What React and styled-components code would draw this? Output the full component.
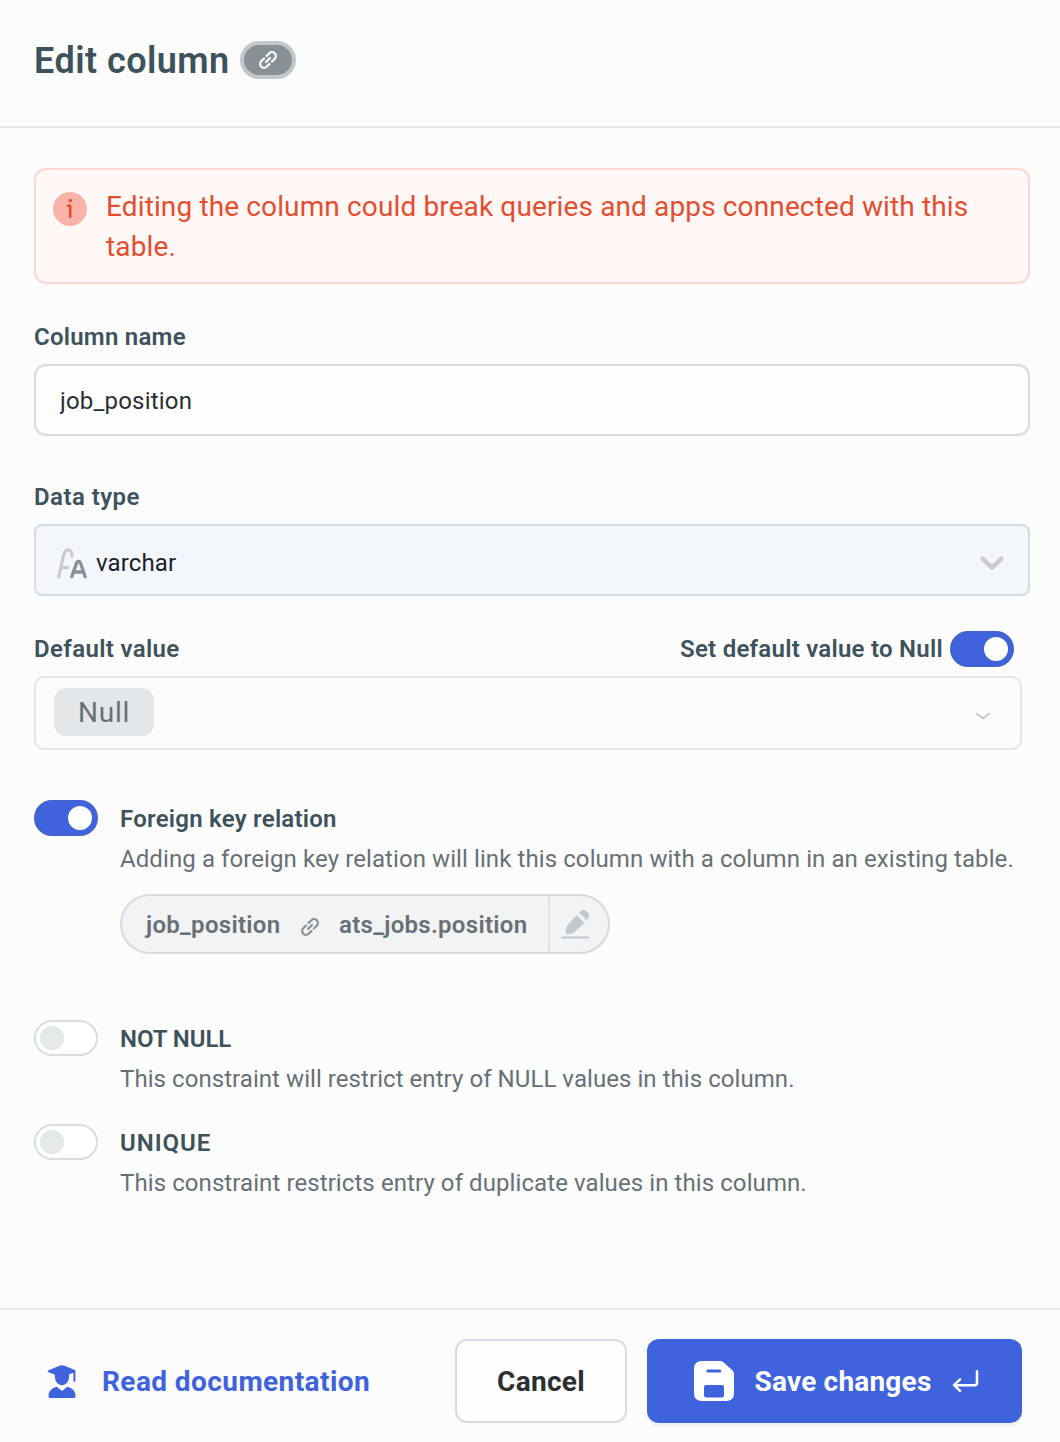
import React, { useState } from 'react';
import styled, { createGlobalStyle } from 'styled-components';

const GlobalStyle = createGlobalStyle`
  * { box-sizing: border-box; }
  body {
    margin: 0;
    background: #fcfcfd;
    font-family: Roboto, "Liberation Sans", sans-serif;
    -webkit-font-smoothing: antialiased;
  }
  svg { display: block; flex: none; }
`;

const Drawer = styled.div`
  display: flex;
  flex-direction: column;
  height: 1442px;
  background: #fcfcfc;
  overflow: hidden;
`;

const Header = styled.header`
  display: flex;
  align-items: center;
  gap: 10px;
  height: 128px;
  padding: 0 34px 6px;
  border-bottom: 2px solid #e6e8eb;
`;

const Title = styled.h1`
  margin: 0;
  padding-top: 2px;
  font-size: 36px;
  line-height: 44px;
  font-weight: 560;
  letter-spacing: 0.46px;
  color: #3e525b;
  width: 196px;
  white-space: nowrap;
`;

const LinkBadge = styled.span`
  display: flex;
  align-items: center;
  justify-content: center;
  width: 56px;
  height: 38px;
  border: 4px solid #c1c8cd;
  border-radius: 19px;
  background: #889096;
  color: #fff;
`;

const Body = styled.main`
  flex: 1;
  display: flex;
  flex-direction: column;
  padding: 40px 30px 0 34px;
`;

const Alert = styled.div`
  display: flex;
  gap: 19px;
  height: 116px;
  padding: 17px 17px 15px;
  border: 2px solid #fdd8d3;
  border-radius: 12px;
  background: #fff8f7;
  color: #e54d2e;
  svg { margin-top: 5px; }
`;

const AlertText = styled.p`
  margin: 0;
  font-size: 28px;
  line-height: 40px;
  letter-spacing: 0.13px;
`;

const Label = styled.span`
  font-size: 24px;
  line-height: 40px;
  font-weight: 560;
  letter-spacing: ${p => p.$track ?? 0.24}px;
  color: #3e525b;
  white-space: nowrap;
`;

const Field = styled.div`
  display: flex;
  flex-direction: column;
  margin-top: ${p => p.$top}px;
`;

const FieldHead = styled.div`
  display: flex;
  justify-content: space-between;
  align-items: center;
  height: 40px;
  padding-right: 16px;
`;

const NullSetting = styled.div`
  display: flex;
  align-items: center;
  gap: 7px;
`;

const Input = styled.input`
  height: 72px;
  margin-top: 7px;
  padding: 2px 24px 0 24px;
  border: 2px solid #d7dbdf;
  border-radius: 12px;
  background: #fdfdfd;
  font: 400 24px Roboto, "Liberation Sans", sans-serif;
  letter-spacing: 0.2px;
  color: #2b2f31;
  outline: none;
`;

const Select = styled.div`
  display: flex;
  align-items: center;
  height: 72px;
  margin-top: 7px;
  padding: 6px 24px 0 20px;
  border: 2px solid #d7dbdf;
  border-radius: 8px;
  background: #f3f6fb;
`;

const SelectValue = styled.span`
  flex: 1;
  margin-left: 9px;
  padding-bottom: 1px;
  font-size: 24px;
  letter-spacing: 0.12px;
  color: #1b1f2a;
`;

const NullSelect = styled.div`
  display: flex;
  align-items: center;
  justify-content: space-between;
  height: 74px;
  margin: 7px 8px 0 0;
  padding: 0 29px 0 18px;
  border: 2px solid #e4e5e6;
  border-radius: 10px;
  background: #fbfcfe;
  svg { margin-top: 3px; }
`;

const NullTag = styled.span`
  display: flex;
  align-items: center;
  justify-content: center;
  width: 100px;
  height: 48px;
  margin-bottom: 2px;
  border-radius: 12px;
  background: #e4e7e9;
  font-size: 28px;
  letter-spacing: 0.7px;
  color: #687076;
`;

const Switch = styled.button`
  display: flex;
  align-items: center;
  flex: none;
  justify-content: ${p => (p.$on ? 'flex-end' : 'flex-start')};
  width: 64px;
  height: 36px;
  padding: 0 4px;
  border: 2px solid ${p => (p.$on ? '#4263cf' : '#dbdcdd')};
  border-radius: 18px;
  background: ${p => (p.$on ? '#3e63dd' : '#fff')};
`;

const Knob = styled.span`
  width: 24px;
  height: 24px;
  border-radius: 50%;
  background: ${p => (p.$on ? '#fff' : '#e4e8e9')};
`;

const Option = styled.section`
  display: flex;
  align-items: flex-start;
  gap: 22px;
  margin-top: ${p => p.$top}px;
`;

const OptionText = styled.div`
  display: flex;
  flex-direction: column;
  margin-top: -1px;
`;

const Hint = styled.p`
  margin: 0;
  font-size: 24px;
  line-height: 40px;
  letter-spacing: ${p => p.$track}px;
  color: #687076;
  white-space: nowrap;
`;

const Relation = styled.div`
  display: flex;
  align-items: center;
  width: 490px;
  height: 60px;
  margin-top: 15px;
  padding: 0 18px 0 24px;
  border: 2px solid #d7dbdf;
  border-radius: 30px;
  background: #f1f3f5;
  color: #687076;
`;

const RelationName = styled.span`
  width: ${p => p.$w}px;
  padding-top: 2px;
  font-size: 24px;
  font-weight: 560;
  letter-spacing: 0.3px;
  white-space: nowrap;
`;

const RelationLink = styled.span`
  margin: 5px 20px 0 19px;
  color: #889096;
`;

const EditCell = styled.span`
  display: flex;
  align-items: center;
  height: 54px;
  margin-left: 19px;
  padding-left: 11px;
  border-left: 2px solid #dfe3e6;
`;

const Footer = styled.footer`
  display: flex;
  align-items: flex-start;
  height: 134px;
  padding: 29px 38px 0 46px;
  border-top: 2px solid #e6e8eb;
`;

const DocsLink = styled.a`
  display: flex;
  align-items: center;
  flex: 1;
  gap: 24px;
  height: 84px;
  font-size: 28px;
  font-weight: 700;
  letter-spacing: 0.42px;
  color: #3e63dd;
`;

const Button = styled.button`
  display: flex;
  align-items: center;
  justify-content: center;
  height: 84px;
  padding: 0;
  border-radius: 12px;
  font: 700 28px Roboto, "Liberation Sans", sans-serif;
`;

const CancelButton = styled(Button)`
  width: 172px;
  margin-right: 20px;
  border: 2px solid #d7dbdf;
  background: #fefefe;
  color: #2b2f31;
  letter-spacing: 0.3px;
`;

const SaveButton = styled(Button)`
  width: 375px;
  padding-left: 3px;
  border: 0;
  background: #3e63dd;
  box-shadow: 0 4px 0 #f1f2f3;
  color: #fff;
  letter-spacing: 0.2px;
`;

const SaveText = styled.span`
  width: 177px;
  margin: 0 20px 0 21px;
  white-space: nowrap;
`;

const LinkIcon = () => (
  <svg width="18" height="18" viewBox="-9 -9 18 18" fill="none" stroke="currentColor" strokeWidth="2.2" strokeLinecap="round">
    <g transform="rotate(-45)">
      <path d="M1.8-3.8H5.7A3.8 3.8 0 0 1 5.7 3.8H1.8M-1.8-3.8H-5.7A3.8 3.8 0 0 0-5.7 3.8H-1.8M-2.8 0H2.8" />
    </g>
  </svg>
);

const InfoIcon = () => (
  <svg width="34" height="34" viewBox="0 0 34 34">
    <circle cx="17" cy="17" r="17" fill="#f8b4a9" />
    <circle cx="17.3" cy="8.6" r="1.8" fill="#e54d2e" />
    <path d="M15 13.8h2.2v11" fill="none" stroke="#e54d2e" strokeWidth="2.6" strokeLinecap="round" strokeLinejoin="round" />
  </svg>
);

const VarcharIcon = () => (
  <svg width="31" height="31" viewBox="0 0 31 31" fill="none" strokeLinecap="round" strokeLinejoin="round">
    <path d="M2.8 28.8 7.4 8C8.6 3.2 10 1.9 11.9 1.9c2.6 0 4.1 2.2 4.1 6.2M5.2 19.6h6.4" stroke="#c9cbcd" strokeWidth="3.2" />
    <path d="M15.8 28.8 20.4 15.4c1-2.7 3.4-2.7 4.3 0L29.2 28.8M17.8 24h9.4" stroke="#889096" strokeWidth="3.3" />
  </svg>
);

const ChevronIcon = () => (
  <svg width="24" height="16" viewBox="0 0 24 16" fill="none" stroke="#cccccc" strokeWidth="4.4" strokeLinecap="round" strokeLinejoin="round">
    <path d="m2.6 3.6 9.4 9 9.4-9" />
  </svg>
);

const SmallChevronIcon = () => (
  <svg width="16" height="10" viewBox="0 0 16 10" fill="none" stroke="#c1c8cd" strokeWidth="1.9" strokeLinecap="round" strokeLinejoin="round">
    <path d="m1.8 3.8 6.2 4.6 6.2-4.6" />
  </svg>
);

const PencilIcon = () => (
  <svg width="28" height="30" viewBox="0 0 28 30" fill="#c1c8cd">
    <path d="M15.8 6.2 23.4 14 13.6 23Q11.2 25 7.6 25H6.2Q4.7 25 4.8 23.4L5 20.5Q5.2 17.8 7.2 15.6Z" />
    <path d="M17.6 4.6 19.8 2.2Q22.4-.4 25.6 2.2 29.4 5.6 27.4 8.9L25 12Q24.4 9.4 22.2 7.2 20 5.2 17.6 4.6Z" />
    <path d="M1.1 28.5H26.9" stroke="#c1c8cd" strokeWidth="2.2" strokeLinecap="round" />
  </svg>
);

const GraduateIcon = () => (
  <svg width="32" height="36" viewBox="0 0 32 36" fill="#3e63dd">
    <path d="M2 7.6 13.5 2.8Q16 1.8 18.5 2.8L29.4 7.2V18.2Q28.5 19.2 27.4 18.2V9.8L23 11.6V14C23 18.6 20 22.2 16 22.2S9 18.6 9 14V11.8L2.5 9.2Q1.2 8.6 2 7.6Z" />
    <path d="M10.8 23.8 16 28 21.2 23.8Q29.3 26 29.6 32.4 29.6 35 27 35H5Q2.4 35 2.4 32.4 2.9 26 10.8 23.8Z" />
  </svg>
);

const SaveIcon = () => (
  <svg width="40" height="40" viewBox="0 0 40 40">
    <path d="M8 0H26Q28 0 29.6 1.4L38.6 9.6Q40 11 40 13V32Q40 40 32 40H8Q0 40 0 32V8Q0 0 8 0Z" fill="#fff" />
    <rect x="12.3" y="8.6" width="15" height="3" rx="1.5" fill="#3e63dd" />
    <rect x="10" y="24" width="20" height="12.6" rx="2" fill="#3e63dd" />
  </svg>
);

const EnterIcon = () => (
  <svg width="27" height="24" viewBox="0 0 27 24" fill="none" stroke="#fff" strokeWidth="2.5" strokeLinecap="round" strokeLinejoin="round">
    <path d="M25 2.2V13.7Q25 16.2 22.5 16.2H2M8 10.4 2 16.2 8 21.8" />
  </svg>
);

function Toggle({ initial, label }) {
  const [on, setOn] = useState(initial);
  return (
    <Switch type="button" role="switch" aria-checked={on} aria-label={label} $on={on} onClick={() => setOn(!on)}>
      <Knob $on={on} />
    </Switch>
  );
}

export default function App() {
  const [name, setName] = useState('job_position');
  return (
    <Drawer>
      <GlobalStyle />
      <Header>
        <Title>Edit column</Title>
        <LinkBadge><LinkIcon /></LinkBadge>
      </Header>
      <Body>
        <Alert>
          <InfoIcon />
          <AlertText>Editing the column could break queries and apps connected with this table.</AlertText>
        </Alert>
        <Field $top={33}>
          <Label>Column name</Label>
          <Input value={name} onChange={e => setName(e.target.value)} />
        </Field>
        <Field $top={41}>
          <Label $track={0.44}>Data type</Label>
          <Select>
            <VarcharIcon />
            <SelectValue>varchar</SelectValue>
            <ChevronIcon />
          </Select>
        </Field>
        <Field $top={33}>
          <FieldHead>
            <Label $track={0.36}>Default value</Label>
            <NullSetting>
              <Label $track={0.26}>Set default value to Null</Label>
              <Toggle initial label="Set default value to Null" />
            </NullSetting>
          </FieldHead>
          <NullSelect>
            <NullTag>Null</NullTag>
            <SmallChevronIcon />
          </NullSelect>
        </Field>
        <Option $top={50}>
          <Toggle initial label="Foreign key relation" />
          <OptionText>
            <Label>Foreign key relation</Label>
            <Hint $track={0.09}>Adding a foreign key relation will link this column with a column in an existing table.</Hint>
            <Relation>
              <RelationName $w={136}>job_position</RelationName>
              <RelationLink><LinkIcon /></RelationLink>
              <RelationName $w={190}>ats_jobs.position</RelationName>
              <EditCell><PencilIcon /></EditCell>
            </Relation>
          </OptionText>
        </Option>
        <Option $top={66}>
          <Toggle initial={false} label="NOT NULL" />
          <OptionText>
            <Label $track={-0.05}>NOT NULL</Label>
            <Hint $track={0.06}>This constraint will restrict entry of NULL values in this column.</Hint>
          </OptionText>
        </Option>
        <Option $top={25}>
          <Toggle initial={false} label="UNIQUE" />
          <OptionText>
            <Label $track={0.95}>UNIQUE</Label>
            <Hint $track={0.085}>This constraint restricts entry of duplicate values in this column.</Hint>
          </OptionText>
        </Option>
      </Body>
      <Footer>
        <DocsLink>
          <GraduateIcon />
          Read documentation
        </DocsLink>
        <CancelButton type="button">Cancel</CancelButton>
        <SaveButton type="button">
          <SaveIcon />
          <SaveText>Save changes</SaveText>
          <EnterIcon />
        </SaveButton>
      </Footer>
    </Drawer>
  );
}
